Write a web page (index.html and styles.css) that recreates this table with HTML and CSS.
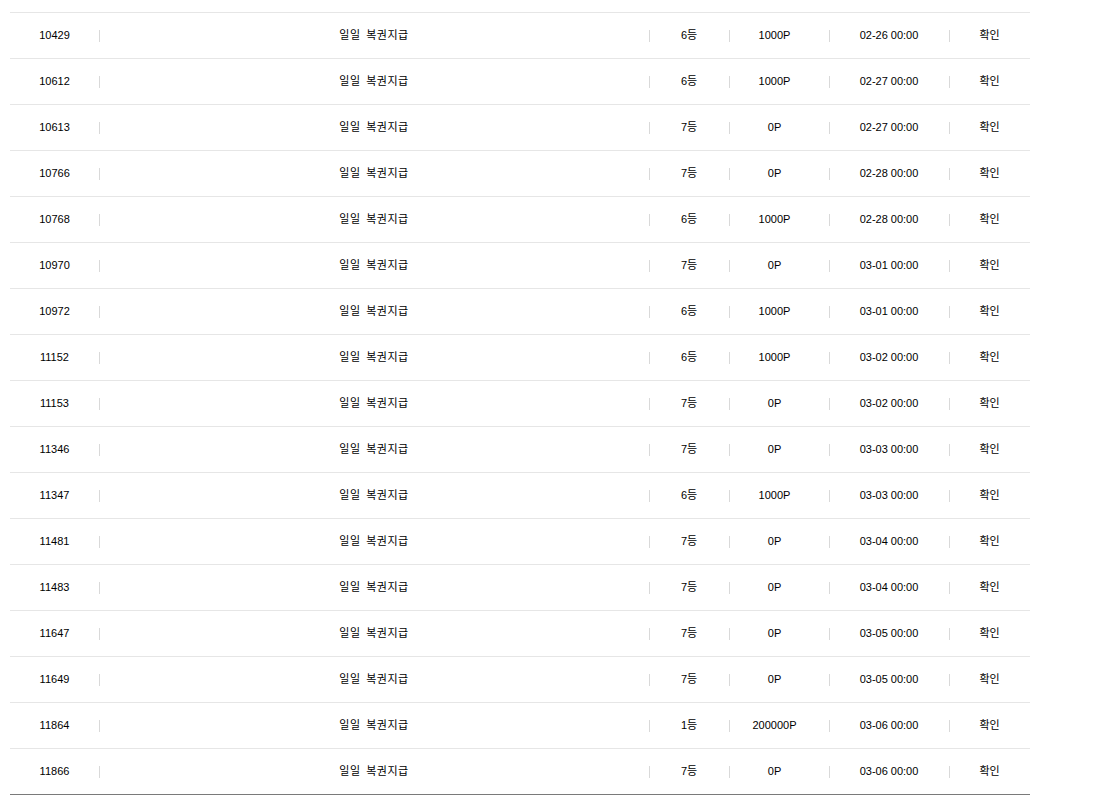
FILE: index.html
```html
<!DOCTYPE html>
<html lang="ko">
<head>
<meta charset="utf-8">
<title>복권지급 내역</title>
<link rel="stylesheet" href="styles.css">
</head>
<body>
<div class="list">
  <div class="row"><div class="c num">10429</div><div class="c title">일일 복권지급</div><div class="c">6등</div><div class="c point">1000P</div><div class="c">02-26 00:00</div><div class="c">확인</div></div>
  <div class="row"><div class="c num">10612</div><div class="c title">일일 복권지급</div><div class="c">6등</div><div class="c point">1000P</div><div class="c">02-27 00:00</div><div class="c">확인</div></div>
  <div class="row"><div class="c num">10613</div><div class="c title">일일 복권지급</div><div class="c">7등</div><div class="c point">0P</div><div class="c">02-27 00:00</div><div class="c">확인</div></div>
  <div class="row"><div class="c num">10766</div><div class="c title">일일 복권지급</div><div class="c">7등</div><div class="c point">0P</div><div class="c">02-28 00:00</div><div class="c">확인</div></div>
  <div class="row"><div class="c num">10768</div><div class="c title">일일 복권지급</div><div class="c">6등</div><div class="c point">1000P</div><div class="c">02-28 00:00</div><div class="c">확인</div></div>
  <div class="row"><div class="c num">10970</div><div class="c title">일일 복권지급</div><div class="c">7등</div><div class="c point">0P</div><div class="c">03-01 00:00</div><div class="c">확인</div></div>
  <div class="row"><div class="c num">10972</div><div class="c title">일일 복권지급</div><div class="c">6등</div><div class="c point">1000P</div><div class="c">03-01 00:00</div><div class="c">확인</div></div>
  <div class="row"><div class="c num">11152</div><div class="c title">일일 복권지급</div><div class="c">6등</div><div class="c point">1000P</div><div class="c">03-02 00:00</div><div class="c">확인</div></div>
  <div class="row"><div class="c num">11153</div><div class="c title">일일 복권지급</div><div class="c">7등</div><div class="c point">0P</div><div class="c">03-02 00:00</div><div class="c">확인</div></div>
  <div class="row"><div class="c num">11346</div><div class="c title">일일 복권지급</div><div class="c">7등</div><div class="c point">0P</div><div class="c">03-03 00:00</div><div class="c">확인</div></div>
  <div class="row"><div class="c num">11347</div><div class="c title">일일 복권지급</div><div class="c">6등</div><div class="c point">1000P</div><div class="c">03-03 00:00</div><div class="c">확인</div></div>
  <div class="row"><div class="c num">11481</div><div class="c title">일일 복권지급</div><div class="c">7등</div><div class="c point">0P</div><div class="c">03-04 00:00</div><div class="c">확인</div></div>
  <div class="row"><div class="c num">11483</div><div class="c title">일일 복권지급</div><div class="c">7등</div><div class="c point">0P</div><div class="c">03-04 00:00</div><div class="c">확인</div></div>
  <div class="row"><div class="c num">11647</div><div class="c title">일일 복권지급</div><div class="c">7등</div><div class="c point">0P</div><div class="c">03-05 00:00</div><div class="c">확인</div></div>
  <div class="row"><div class="c num">11649</div><div class="c title">일일 복권지급</div><div class="c">7등</div><div class="c point">0P</div><div class="c">03-05 00:00</div><div class="c">확인</div></div>
  <div class="row"><div class="c num">11864</div><div class="c title">일일 복권지급</div><div class="c">1등</div><div class="c point">200000P</div><div class="c">03-06 00:00</div><div class="c">확인</div></div>
  <div class="row"><div class="c num">11866</div><div class="c title">일일 복권지급</div><div class="c">7등</div><div class="c point">0P</div><div class="c">03-06 00:00</div><div class="c">확인</div></div>
</div>
</body>
</html>
```

FILE: styles.css
```css
html, body {
  margin: 0;
  padding: 0;
  background: #fff;
}
body {
  padding: 12px 0 0 10px;
  font-family: "Liberation Sans", "Noto Sans CJK KR", sans-serif;
  font-size: 11px;
  color: #000;
}
.list {
  width: 1020px;
  border-bottom: 1px solid #7a7a7a;
}
.row {
  display: grid;
  grid-template-columns: 89px 550px 80px 100px 120px 81px;
  height: 45px;
  border-top: 1px solid #e6e6e6;
}
.c {
  display: flex;
  align-items: center;
  justify-content: center;
  line-height: 1;
  background-image: linear-gradient(#d9d9d9, #d9d9d9);
  background-repeat: no-repeat;
  background-size: 1px 12px;
  background-position: left center;
}
.c.num {
  background-image: none;
}
.c.title {
  letter-spacing: 0.5px;
  word-spacing: 2px;
}
.c.point {
  padding-right: 9px;
}
```
